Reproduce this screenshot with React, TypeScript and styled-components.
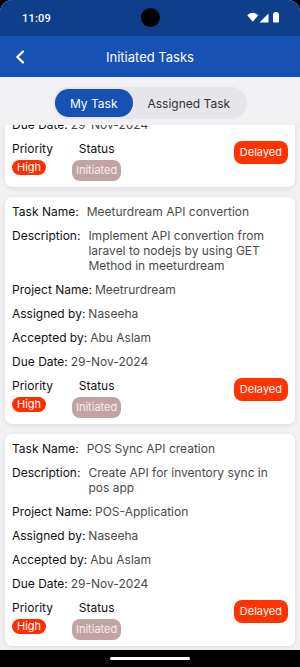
import React, { useLayoutEffect, useRef } from "react";
import styled, { createGlobalStyle } from "styled-components";

const GlobalStyle = createGlobalStyle`
  html, body { margin: 0; padding: 0; background: #000; }
  * { box-sizing: border-box; }
  #root { width: 300px; height: 667px; }
`;

const Screen = styled.div`
  width: 300px;
  height: 667px;
  display: flex;
  flex-direction: column;
  overflow: hidden;
  border-radius: 12px 12px 0 0;
  background: #f1f1f4;
  position: relative;
  font-family: Inter, "Noto Sans", sans-serif;
`;

const StatusBar = styled.div`
  height: 36px;
  flex: none;
  background: #0f3e8b;
  display: flex;
  align-items: center;
  justify-content: space-between;
  padding: 0 20px 0 22px;
  position: relative;
`;

const Time = styled.span`
  font-family: Roboto, "Noto Sans", sans-serif;
  font-weight: 500;
  font-size: 11px;
  color: #fff;
  letter-spacing: 0.2px;
`;

const Camera = styled.div`
  position: absolute;
  left: 141px;
  top: 8px;
  width: 19px;
  height: 19px;
  border-radius: 50%;
  background: #000;
`;

const StatusIcons = styled.div`
  display: flex;
  align-items: center;
`;

const Header = styled.div`
  height: 41px;
  flex: none;
  background: #1651b3;
  display: grid;
  grid-template-columns: 40px 1fr 40px;
  align-items: center;
`;

const BackButton = styled.div`
  display: flex;
  align-items: center;
  padding-left: 14px;
`;

const Title = styled.div`
  text-align: center;
  color: #fff;
  font-size: 13px;
  font-weight: 400;
`;

const SegmentBar = styled.div`
  flex: none;
  display: flex;
  justify-content: center;
  padding: 10px 0 6px;
`;

const Segmented = styled.div`
  display: flex;
  background: #e5e5ea;
  border-radius: 16px;
  padding: 2px;
`;

const SegButton = styled.div<{ $active?: boolean }>`
  height: 28px;
  padding: 0 15px;
  display: flex;
  align-items: center;
  border-radius: 14px;
  font-size: 12px;
  color: ${(p) => (p.$active ? "#fff" : "#333")};
  background: ${(p) => (p.$active ? "#1651b3" : "transparent")};
`;

const List = styled.div`
  flex: 1;
  min-height: 0;
  overflow-y: auto;
  scrollbar-width: none;
  position: relative;
  display: flex;
  flex-direction: column;
  gap: 10px;
  padding: 10px 5px;
  &::-webkit-scrollbar { display: none; }
`;

const Card = styled.div`
  flex: none;
  background: #fff;
  border-radius: 7px;
  padding: 7px 7px 6px;
  box-shadow: 0 1px 5px rgba(0, 0, 0, 0.09);
`;

const Row = styled.div<{ $wide?: boolean }>`
  display: flex;
  gap: ${(p) => (p.$wide ? "8px" : "3px")};
  font-size: 12px;
  line-height: 15px;
  margin-bottom: 9px;
`;

const Label = styled.span`
  flex: none;
  color: #111;
`;

const Value = styled.span`
  color: #4a4a4a;
`;

const Footer = styled.div`
  display: flex;
  justify-content: space-between;
  align-items: flex-start;
`;

const Meta = styled.div`
  display: flex;
  gap: 19px;
`;

const MetaCol = styled.div<{ $center?: boolean }>`
  display: flex;
  flex-direction: column;
  gap: 4px;
  align-items: ${(p) => (p.$center ? "center" : "flex-start")};
`;

const MetaLabel = styled.span`
  font-size: 12px;
  line-height: 15px;
  color: #111;
`;

const Pill = styled.span<{ $bg: string; $fg?: string; $pad: string }>`
  display: inline-block;
  font-size: 11px;
  line-height: 15px;
  padding: ${(p) => p.$pad};
  border-radius: 8px;
  background: ${(p) => p.$bg};
  color: ${(p) => p.$fg || "#fff"};
`;

const NavBar = styled.div`
  height: 17px;
  flex: none;
  background: #000;
  display: flex;
  align-items: center;
  justify-content: center;
`;

const HomeIndicator = styled.div`
  width: 80px;
  height: 3px;
  border-radius: 2px;
  background: #fff;
`;

type Task = {
  name: string;
  description: string;
  project: string;
  assignedBy: string;
  acceptedBy: string;
  due: string;
};

const tasks: Task[] = [
  {
    name: "Dashboard API integration",
    description: "Integrate dashboard API with the mobile application",
    project: "Meetrurdream",
    assignedBy: "Naseeha",
    acceptedBy: "Abu Aslam",
    due: "29-Nov-2024",
  },
  {
    name: "Meeturdream API convertion",
    description:
      "Implement API convertion from laravel to nodejs by using GET Method in meeturdream",
    project: "Meetrurdream",
    assignedBy: "Naseeha",
    acceptedBy: "Abu Aslam",
    due: "29-Nov-2024",
  },
  {
    name: "POS Sync API creation",
    description: "Create API for inventory sync in pos app",
    project: "POS-Application",
    assignedBy: "Naseeha",
    acceptedBy: "Abu Aslam",
    due: "29-Nov-2024",
  },
];

const TaskCard = React.forwardRef<HTMLDivElement, { task: Task }>(({ task }, ref) => (
  <Card ref={ref}>
    <Row $wide>
      <Label>Task Name:</Label>
      <Value>{task.name}</Value>
    </Row>
    <Row $wide>
      <Label>Description:</Label>
      <Value>{task.description}</Value>
    </Row>
    <Row>
      <Label>Project Name:</Label>
      <Value>{task.project}</Value>
    </Row>
    <Row>
      <Label>Assigned by:</Label>
      <Value>{task.assignedBy}</Value>
    </Row>
    <Row>
      <Label>Accepted by:</Label>
      <Value>{task.acceptedBy}</Value>
    </Row>
    <Row>
      <Label>Due Date:</Label>
      <Value>{task.due}</Value>
    </Row>
    <Footer>
      <Meta>
        <MetaCol>
          <MetaLabel>Priority</MetaLabel>
          <Pill $bg="#ff2e00" $pad="0 5px">High</Pill>
        </MetaCol>
        <MetaCol $center>
          <MetaLabel>Status</MetaLabel>
          <Pill $bg="#c2a3a3" $fg="#f6eeee" $pad="3px 4px">Initiated</Pill>
        </MetaCol>
      </Meta>
      <Pill $bg="#ff3300" $pad="4px 6px">Delayed</Pill>
    </Footer>
  </Card>
));

export default function App() {
  const listRef = useRef<HTMLDivElement>(null);
  const secondRef = useRef<HTMLDivElement>(null);

  useLayoutEffect(() => {
    const list = listRef.current;
    const second = secondRef.current;
    if (list && second) {
      list.scrollTop = second.offsetTop - 72;
    }
  }, []);

  return (
    <>
      <GlobalStyle />
      <Screen>
        <StatusBar>
          <Time>11:09</Time>
          <Camera />
          <StatusIcons>
            <svg width="33" height="12" viewBox="0 0 33 12">
              <path d="M0.3 3.2 Q5.8 -1.6 11.3 3.2 L5.8 9.8 Z" fill="#fff" />
              <path d="M21.5 1.5 L21.5 10.5 L12.5 10.5 Z" fill="#fff" />
              <rect x="27.3" y="0" width="3.4" height="1.5" fill="#fff" />
              <rect x="26" y="1" width="6" height="9.5" rx="1" fill="#fff" />
            </svg>
          </StatusIcons>
        </StatusBar>
        <Header>
          <BackButton>
            <svg width="12" height="16" viewBox="0 0 12 16">
              <polyline
                points="9,2.5 3.3,8 9,13.5"
                fill="none"
                stroke="#fff"
                strokeWidth="2.4"
                strokeLinecap="round"
                strokeLinejoin="round"
              />
            </svg>
          </BackButton>
          <Title>Initiated Tasks</Title>
          <div />
        </Header>
        <SegmentBar>
          <Segmented>
            <SegButton $active>My Task</SegButton>
            <SegButton>Assigned Task</SegButton>
          </Segmented>
        </SegmentBar>
        <List ref={listRef}>
          {tasks.map((t, i) => (
            <TaskCard key={i} task={t} ref={i === 1 ? secondRef : undefined} />
          ))}
        </List>
        <NavBar>
          <HomeIndicator />
        </NavBar>
      </Screen>
    </>
  );
}
